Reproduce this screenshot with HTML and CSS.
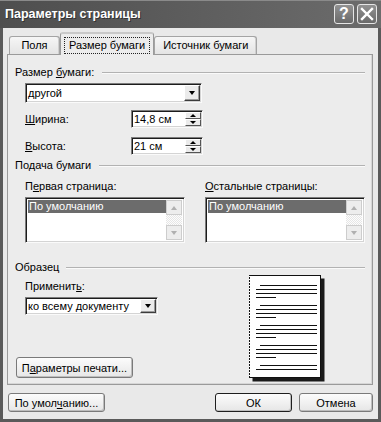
FILE: index.html
```html
<!DOCTYPE html>
<html lang="ru">
<head>
    <meta charset="UTF-8">
    <title>Параметры страницы</title>
    <link rel="stylesheet" href="styles.css">
</head>
<body>

<div class="window">
    <!-- Title bar -->
    <div class="titlebar">
        <span class="title">Параметры страницы</span>
        <div class="title-buttons">
            <span class="tbtn help">?</span>
            <span class="tbtn">
                <svg width="14" height="14" viewBox="0 0 14 14">
                    <path d="M2 2 L12 12 M12 2 L2 12" stroke="#fff" stroke-width="2.4" stroke-linecap="square"/>
                </svg>
            </span>
        </div>
    </div>

    <div class="client">
        <!-- Tabs -->
        <div class="tabs">
            <div class="tab first">Поля</div>
            <div class="tab active"><span class="focus">Размер бумаги</span></div>
            <div class="tab">Источник бумаги</div>
        </div>

        <div class="panel">
            <div class="group-title"><span>Размер <u>б</u>умаги:</span></div>

            <div class="combo combo-size sunken">
                <span class="combo-text">другой</span>
                <span class="drop"><i class="tri"></i></span>
            </div>

            <div class="field-row row-width">
                <span class="field-label"><u>Ш</u>ирина:</span>
                <div class="spin sunken">
                    <span class="spin-text">14,8 см</span>
                    <span class="spin-btns">
                        <span class="spin-btn"><i class="tri up"></i></span>
                        <span class="spin-btn"><i class="tri"></i></span>
                    </span>
                </div>
            </div>

            <div class="field-row row-height">
                <span class="field-label"><u>В</u>ысота:</span>
                <div class="spin sunken">
                    <span class="spin-text">21 см</span>
                    <span class="spin-btns">
                        <span class="spin-btn"><i class="tri up"></i></span>
                        <span class="spin-btn"><i class="tri"></i></span>
                    </span>
                </div>
            </div>

            <div class="group-title feed-title"><span>Подача бумаги</span></div>

            <div class="cols labels">
                <span class="col">П<u>е</u>рвая страница:</span>
                <span class="col"><u>О</u>стальные страницы:</span>
            </div>

            <div class="cols lists">
                <div class="listbox sunken col">
                    <div class="items"><div class="item selected">По умолчанию</div></div>
                    <div class="vscroll">
                        <span class="sbtn"><i class="tri up dim"></i></span>
                        <span class="sbtn"><i class="tri dim"></i></span>
                    </div>
                </div>
                <div class="listbox sunken col">
                    <div class="items"><div class="item selected">По умолчанию</div></div>
                    <div class="vscroll">
                        <span class="sbtn"><i class="tri up dim"></i></span>
                        <span class="sbtn"><i class="tri dim"></i></span>
                    </div>
                </div>
            </div>

            <div class="group-title sample-title"><span>Образец</span></div>

            <div class="sample">
                <div class="sample-left">
                    <span class="apply-label">Применит<u>ь</u>:</span>
                    <div class="combo combo-apply sunken">
                        <span class="combo-text">ко всему документу</span>
                        <span class="drop"><i class="tri"></i></span>
                    </div>
                    <button class="btn print-btn">П<u>а</u>раметры печати...</button>
                </div>

                <!-- page preview -->
                <svg class="preview" width="76" height="107" viewBox="0 0 76 107">
                    <rect x="3.5" y="3.5" width="72" height="103" fill="#1a1a1a"/>
                    <rect x="0.5" y="0.5" width="71" height="102" fill="#fff" stroke="#111" stroke-width="1"/>
                    <line x1="0.5" y1="1" x2="0.5" y2="102" stroke="#fff" stroke-width="1" stroke-dasharray="1 2"/>
                    <g stroke="#111" stroke-width="1">
                        <line x1="11" y1="10.5" x2="68" y2="10.5"/>
                        <line x1="7" y1="14.5" x2="68" y2="14.5"/>
                        <line x1="7" y1="18.5" x2="68" y2="18.5"/>
                        <line x1="7" y1="22.5" x2="27" y2="22.5"/>

                        <line x1="11" y1="30.5" x2="68" y2="30.5"/>
                        <line x1="7" y1="34.5" x2="68" y2="34.5"/>
                        <line x1="7" y1="38.5" x2="68" y2="38.5"/>
                        <line x1="7" y1="42.5" x2="27" y2="42.5"/>

                        <line x1="11" y1="50.5" x2="68" y2="50.5"/>
                        <line x1="7" y1="54.5" x2="68" y2="54.5"/>
                        <line x1="7" y1="58.5" x2="68" y2="58.5"/>
                        <line x1="7" y1="62.5" x2="27" y2="62.5"/>

                        <line x1="11" y1="70.5" x2="68" y2="70.5"/>
                        <line x1="7" y1="74.5" x2="68" y2="74.5"/>
                        <line x1="7" y1="78.5" x2="68" y2="78.5"/>
                        <line x1="7" y1="82.5" x2="27" y2="82.5"/>

                        <line x1="11" y1="90.5" x2="68" y2="90.5"/>
                        <line x1="7" y1="94.5" x2="68" y2="94.5"/>
                    </g>
                </svg>
            </div>
        </div>

        <!-- Dialog buttons -->
        <div class="footer">
            <button class="btn btn-default-values">По умол<u>ч</u>анию...</button>
            <button class="btn btn-ok">ОК</button>
            <button class="btn btn-cancel">Отмена</button>
        </div>
    </div>
</div>

</body>
</html>
```

FILE: styles.css
```css
* {
    box-sizing: border-box;
}
body {
    margin: 0;
    font-family: 'Liberation Sans', Arial, sans-serif;
    font-size: 11px;
    color: #000;
    background: #fff;
}
u {
    text-decoration: underline;
    text-underline-offset: 1px;
}
.window {
    width: 381px;
    height: 422px;
    display: flex;
    flex-direction: column;
    background: #5a5a5a;
}

/* Title bar */
.titlebar {
    flex: none;
    height: 28px;
    display: flex;
    align-items: center;
    justify-content: space-between;
    padding: 0 4px 0 5px;
    background: linear-gradient(to right, #4e4e4e, #6c6c6c);
    box-shadow: inset 0 1px 0 #8a8a8a;
    color: #fff;
}
.title {
    font-size: 12.5px;
    font-weight: bold;
    text-shadow: 1px 1px 0 #333;
}
.title-buttons {
    display: flex;
    gap: 3px;
}
.tbtn {
    width: 20px;
    height: 20px;
    display: flex;
    align-items: center;
    justify-content: center;
    border: 1px solid #e6e6e6;
    border-radius: 3px;
    background: linear-gradient(#929292, #6a6a6a);
    color: #fff;
    font-size: 16px;
    font-weight: bold;
}

/* Client area */
.client {
    flex: 1;
    margin: 0 3px 3px;
    padding: 4px 5px 0 4px;
    background: #e9e9e9;
    display: flex;
    flex-direction: column;
}
.tabs {
    display: flex;
    align-items: flex-end;
    height: 22px;
    padding-left: 2px;
    position: relative;
    z-index: 1;
}
.tab {
    height: 18px;
    line-height: 17px;
    padding: 0 8px;
    border: 1px solid #a4a4a4;
    border-bottom: none;
    border-radius: 3px 3px 0 0;
    background: linear-gradient(#f6f6f6, #e4e4e4);
    box-shadow: inset -1px 0 0 #cfcfcf;
    white-space: nowrap;
}
.tab.first {
    width: 51px;
    text-align: center;
}
.tab.active {
    height: 23px;
    margin-bottom: -1px;
    padding: 3px 3px 0;
    background: #ececec;
    border-color: #9a9a9a;
    border-top: 2px solid #c9c9c9;
    box-shadow: none;
}
.focus {
    display: block;
    height: 17px;
    line-height: 15px;
    padding: 0 4px;
    border: 1px dotted #222;
}

.panel {
    height: 331px;
    padding: 11px 7px 0;
    border: 1px solid #9a9a9a;
    background: #ececec;
    box-shadow: inset -1px -1px 0 #d6d6d6;
}
.group-title {
    display: flex;
    align-items: center;
    gap: 8px;
    height: 13px;
    line-height: 13px;
    white-space: nowrap;
}
.group-title::after {
    content: "";
    flex: 1;
    border-top: 1px solid #b2b2b2;
    border-bottom: 1px solid #fafafa;
}
.feed-title {
    margin-top: 4px;
}
.sample-title {
    margin-top: 18px;
    gap: 7px;
}

/* Sunken fields */
.sunken {
    background: #fff;
    border: 1px solid;
    border-color: #7c7c7c #fafafa #fafafa #7c7c7c;
    box-shadow: inset 1px 1px 0 #1c1c1c, inset -1px -1px 0 #d4d4d4;
}
.combo {
    display: flex;
    align-items: center;
    padding: 1px 1px 1px 2px;
    margin-left: 10px;
}
.combo-text {
    flex: 1;
    line-height: 14px;
}
.combo-size {
    width: 177px;
    height: 20px;
    margin-top: 4px;
}
.combo-apply {
    width: 133px;
    height: 18px;
    margin-top: 4px;
}
.drop {
    width: 16px;
    height: 100%;
    display: flex;
    align-items: center;
    justify-content: center;
    background: #ebebeb;
    border: 1px solid;
    border-color: #fff #3c3c3c #3c3c3c #fff;
    box-shadow: inset -1px -1px 0 #9a9a9a;
}
.tri {
    display: block;
    width: 0;
    height: 0;
    border-left: 3.5px solid transparent;
    border-right: 3.5px solid transparent;
    border-top: 4px solid #000;
}
.tri.up {
    border-top: none;
    border-bottom: 4px solid #000;
}
.tri.dim {
    border-top-color: #b0b0b0;
}
.tri.up.dim {
    border-bottom-color: #b0b0b0;
}

.field-row {
    display: flex;
    align-items: center;
    margin-left: 10px;
}
.row-width {
    margin-top: 7px;
}
.row-height {
    margin-top: 9px;
}
.field-label {
    width: 106px;
}
.spin {
    width: 72px;
    height: 18px;
    display: flex;
    align-items: center;
    padding: 1px 1px 1px 2px;
}
.spin-text {
    flex: 1;
}
.spin-btns {
    width: 16px;
    height: 100%;
    display: flex;
    flex-direction: column;
}
.spin-btn {
    flex: 1;
    display: flex;
    align-items: center;
    justify-content: center;
    background: #ebebeb;
    border: 1px solid;
    border-color: #fff #555 #555 #fff;
}
.spin-btn .tri {
    border-left-width: 3px;
    border-right-width: 3px;
    border-top-width: 3px;
}
.spin-btn .tri.up {
    border-bottom-width: 3px;
}

/* Paper source lists */
.cols {
    display: flex;
    gap: 20px;
    margin-left: 10px;
}
.col {
    width: 160px;
}
.labels {
    margin-top: 8px;
    line-height: 13px;
}
.lists {
    margin-top: 4px;
}
.listbox {
    height: 46px;
    display: flex;
    padding: 2px 2px 2px 2px;
}
.items {
    flex: 1;
}
.item {
    height: 13px;
    line-height: 13px;
    padding-left: 1px;
}
.item.selected {
    background: #6c6c6c;
    color: #fff;
}
.vscroll {
    width: 16px;
    display: flex;
    flex-direction: column;
    justify-content: space-between;
    background: repeating-conic-gradient(#fdfdfd 0 25%, #e6e6e6 0 50%) 0 0 / 2px 2px;
}
.sbtn {
    height: 15px;
    display: flex;
    align-items: center;
    justify-content: center;
    background: #ededed;
    border: 1px solid #cdcdcd;
}

/* Sample */
.sample {
    display: flex;
    height: 107px;
    margin-top: 1px;
}
.sample-left {
    width: 234px;
    display: flex;
    flex-direction: column;
    align-items: flex-start;
}
.apply-label {
    margin: 5px 0 0 10px;
    line-height: 13px;
}

/* Buttons */
.btn {
    font-family: inherit;
    font-size: 11px;
    color: #000;
    height: 19px;
    padding: 0;
    border: 1px solid #7a7a7a;
    border-radius: 3px;
    background: linear-gradient(#fcfcfc, #e6e6e6);
    box-shadow: inset -1px -1px 0 #bdbdbd;
}
.print-btn {
    width: 117px;
    height: 21px;
    margin: auto 0 4px 1px;
}
.footer {
    display: flex;
    margin-top: 8px;
}
.btn-default-values {
    width: 97px;
    margin-left: 1px;
}
.btn-ok {
    width: 77px;
    margin-left: auto;
    border-color: #1e1e1e;
}
.btn-cancel {
    width: 74px;
    margin-left: 7px;
}
```
